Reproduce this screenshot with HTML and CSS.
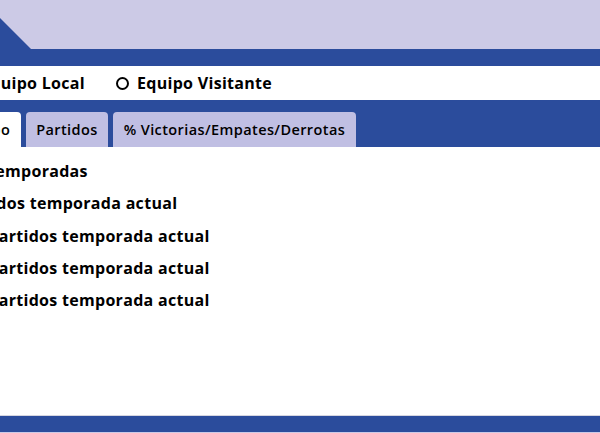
FILE: index.html
```html
<!DOCTYPE html>
<html lang="es">
<head>
<meta charset="utf-8">
<title>Estadísticas</title>
<link rel="stylesheet" href="styles.css">
</head>
<body>
<header class="top">
  <svg class="corner" width="40" height="49" viewBox="0 0 40 49"><polygon points="0,18 31,49 0,49" fill="#2b4c9c"/></svg>
</header>
<div class="band"></div>
<div class="radios">
  <div class="radio-list">
    <label class="radio"><span class="dot checked"></span>Equipo Local</label>
    <label class="radio"><span class="dot"></span>Equipo Visitante</label>
  </div>
</div>
<nav class="tabbar">
  <div class="tabs">
    <span class="tab active">Equipo</span>
    <span class="tab">Partidos</span>
    <span class="tab">% Victorias/Empates/Derrotas</span>
  </div>
</nav>
<main class="content">
  <ul class="list">
    <li>Las temporadas</li>
    <li>Partidos temporada actual</li>
    <li>Los partidos temporada actual</li>
    <li>Los partidos temporada actual</li>
    <li>Los partidos temporada actual</li>
  </ul>
</main>
<footer class="foot"></footer>
</body>
</html>
```

FILE: styles.css
```css
* { box-sizing: border-box; }
html, body { margin: 0; padding: 0; }
body {
  width: 600px;
  height: 433px;
  overflow: hidden;
  background: #ffffff;
  font-family: "Open Sans", "DejaVu Sans", sans-serif;
  color: #000;
}
.top {
  height: 49px;
  background: #cccae6;
  position: relative;
}
.corner { position: absolute; left: 0; top: 0; }
.band { height: 17px; background: #2b4c9c; }
.radios {
  height: 34px;
  display: flex;
  align-items: center;
}
.radio-list { display: flex; gap: 31px; margin-left: -40px; }
.radio {
  display: flex;
  align-items: center;
  gap: 8px;
  font-weight: 700;
  font-size: 16px;
  letter-spacing: 0.3px;
}
.dot {
  width: 13px;
  height: 13px;
  border: 2px solid #000;
  border-radius: 50%;
}
.dot.checked { background: radial-gradient(circle, #000 0 3px, transparent 3.5px); }
.tabbar {
  height: 47px;
  background: #2b4c9c;
  padding-top: 12px;
}
.tabs { display: flex; gap: 5px; height: 35px; margin-left: -51px; }
.tab {
  display: flex;
  align-items: center;
  padding: 0 10.5px;
  background: #c0bfe3;
  border-radius: 4px 4px 0 0;
  font-size: 14.5px;
  font-weight: 600;
  letter-spacing: 0.4px;
}
.tab.active { background: #fff; }
.content { height: 268px; padding-top: 8px; }
.list {
  list-style: none;
  padding: 0;
  margin: 0 0 0 -44px;
}
.list li {
  height: 32.3px;
  display: flex;
  align-items: center;
  font-size: 16px;
  font-weight: 700;
  letter-spacing: 0.3px;
}
.foot {
  height: 18px;
  background: #2b4c9c;
  border-top: 1px solid #d6d6e0;
  border-bottom: 1px solid #cccae6;
}
```
